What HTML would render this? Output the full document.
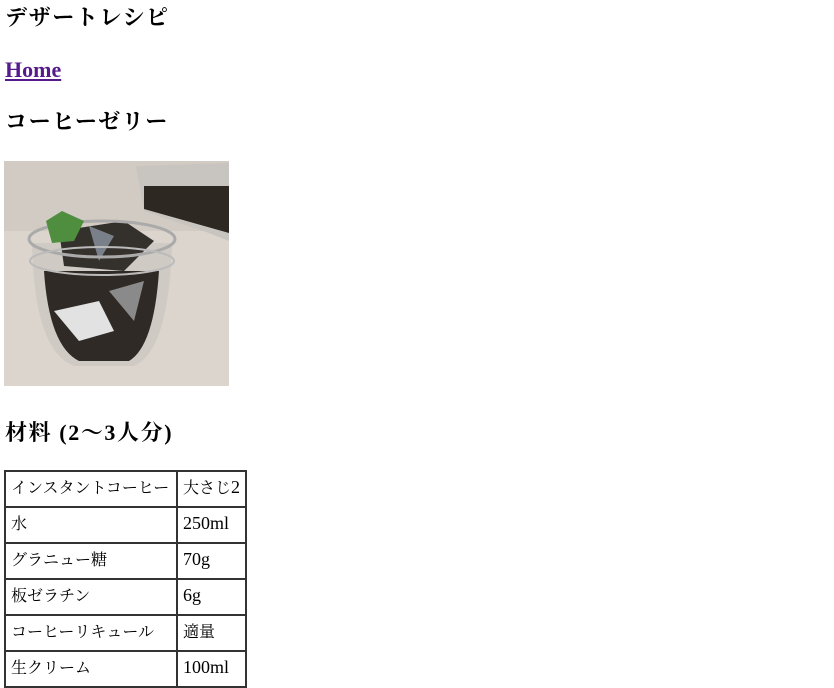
<!DOCTYPE html>
<html><head><meta charset="utf-8"><style>
body{margin:0;background:#fff;font-family:"Liberation Serif","Noto Serif CJK JP",serif;color:#000;width:834px;height:682px;overflow:hidden;position:relative}
.h{position:absolute;left:5px;font-size:22px;font-weight:bold;line-height:26px;margin:0;white-space:nowrap;letter-spacing:1.6px}
a{color:#551a8b;text-decoration:underline;letter-spacing:0}
table{position:absolute;left:4px;top:470px;border-collapse:separate;border-spacing:0;border:1px solid #333;font-size:16px}
td{border:1px solid #333;height:34px;padding:0 5px;line-height:34px;white-space:nowrap;box-sizing:border-box}
tr{height:36px}
td.b{width:172px}
td.c{width:69px}
.l{font-size:18px;line-height:0}
</style></head><body>
<div class="h" style="top:5px">デザートレシピ</div>
<div class="h" style="top:57px"><a>Home</a></div>
<div class="h" style="top:109px">コーヒーゼリー</div>
<svg style="position:absolute;left:4px;top:161px" width="225" height="225" viewBox="0 0 225 225">
<rect width="225" height="225" fill="#dcd5cd"/>
<rect y="0" width="225" height="70" fill="#d2cbc3"/>
<path d="M132 5 L225 2 L225 80 L205 72 L140 50 Z" fill="#c8c4bf"/>
<path d="M140 25 L225 25 L225 72 L140 48Z" fill="#2e2822"/>
<path d="M28 82 Q30 190 70 205 L130 205 Q165 190 168 82 Z" fill="#cfcac4"/>
<path d="M40 110 Q45 185 75 200 L125 200 Q150 185 155 110 Z" fill="#2f2a25"/>
<path d="M50 150 L95 140 L110 170 L75 180Z" fill="#e2e2e2"/>
<path d="M105 130 L140 120 L130 160Z" fill="#8a8a8a"/>
<path d="M55 70 L120 60 L150 80 L120 110 L60 105Z" fill="#34302c"/>
<path d="M85 65 L110 75 L95 100Z" fill="#7a808a"/>
<ellipse cx="98" cy="78" rx="73" ry="18" fill="none" stroke="#aaa" stroke-width="3"/>
<ellipse cx="98" cy="100" rx="72" ry="14" fill="none" stroke="#bbb" stroke-width="2"/>
<path d="M42 60 L58 50 L80 60 L70 80 L48 82Z" fill="#4e8e3e"/>
</svg>
<div class="h" style="top:420px">材料 (2〜3人分)</div>
<table>
<tr><td class="b">インスタントコーヒー</td><td class="c">大さじ<span class="l">2</span></td></tr>
<tr><td class="b">水</td><td class="c"><span class="l">250ml</span></td></tr>
<tr><td class="b">グラニュー糖</td><td class="c"><span class="l">70g</span></td></tr>
<tr><td class="b">板ゼラチン</td><td class="c"><span class="l">6g</span></td></tr>
<tr><td class="b">コーヒーリキュール</td><td class="c">適量</td></tr>
<tr><td class="b">生クリーム</td><td class="c"><span class="l">100ml</span></td></tr>
</table>
</body></html>
